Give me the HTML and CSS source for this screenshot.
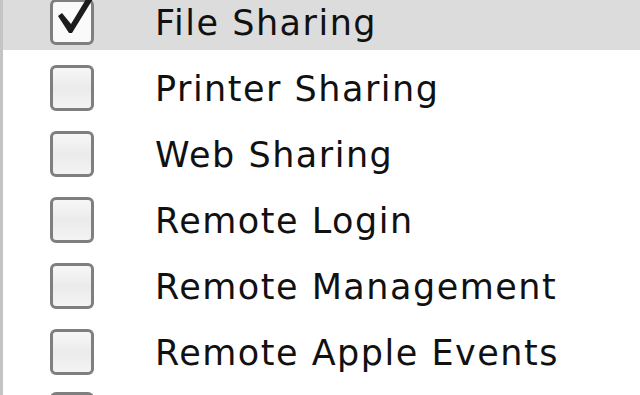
FILE: index.html
```html
<!DOCTYPE html>
<html lang="en">
<head>
    <meta charset="UTF-8">
    <title>Sharing Services</title>
    <link rel="stylesheet" href="styles.css">
</head>
<body>
    <ul class="servicos">
        <li class="servico ativo">
            <span class="caixa marcada">
                <svg class="visto" viewBox="0 0 50 50" width="50" height="50">
                    <path d="M3 23 L7 20 L16 31 L36 -2 L41 1 L17 40 L14 40 Z" fill="#1c1c1c"/>
                </svg>
            </span>
            <span class="nome">File Sharing</span>
        </li>
        <li class="servico"><span class="caixa"></span><span class="nome">Printer Sharing</span></li>
        <li class="servico"><span class="caixa"></span><span class="nome">Web Sharing</span></li>
        <li class="servico"><span class="caixa"></span><span class="nome">Remote Login</span></li>
        <li class="servico"><span class="caixa"></span><span class="nome">Remote Management</span></li>
        <li class="servico"><span class="caixa"></span><span class="nome">Remote Apple Events</span></li>
        <li class="servico ultimo"><span class="caixa"></span></li>
    </ul>
</body>
</html>
```

FILE: styles.css
```css
* {
    box-sizing: border-box;
    margin: 0;
    padding: 0;
}

html, body {
    height: 100%;
    overflow: hidden;
}

body {
    background-color: #fff;
    font-family: "DejaVu Sans", Verdana, sans-serif;
    border-left: 3px solid #c4c4c4;
}

.servicos {
    list-style: none;
    margin-top: -16px;
}

.servico {
    height: 66px;
    display: flex;
    align-items: flex-start;
    padding-left: 47px;
}

.ativo {
    background-color: #dcdcdc;
}

.ultimo {
    margin-top: -3px;
}

.caixa {
    position: relative;
    flex: none;
    width: 44px;
    height: 46px;
    margin-top: 15px;
    border: 3px solid #7f7f7f;
    border-radius: 6px;
    background-image: linear-gradient(180deg, #f7f7f7 0%, #ebebeb 50%, #f3f3f3 100%);
}

.marcada {
    background: #fafafa;
}

.visto {
    position: absolute;
    left: 2px;
    top: -9px;
    overflow: visible;
}

.nome {
    margin-left: 61px;
    margin-top: 19px;
    font-size: 35px;
    line-height: 40px;
    letter-spacing: 1.5px;
    color: #111;
}
```
